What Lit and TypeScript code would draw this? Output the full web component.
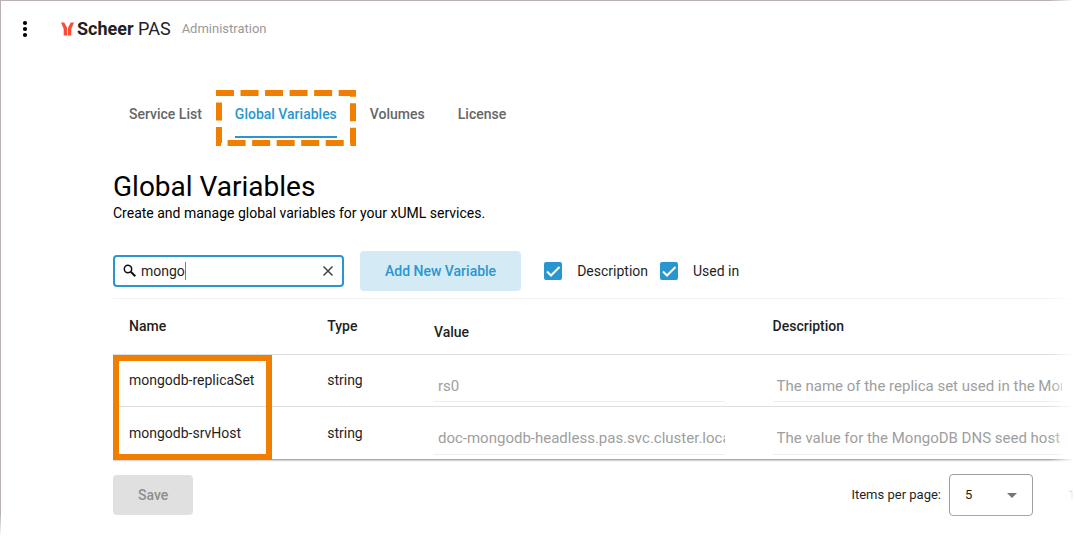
import { LitElement, html, css } from "lit";
import { customElement, state } from "lit/decorators.js";

interface Variable {
  name: string;
  type: string;
  value: string;
  description: string;
}

@customElement("app-root")
export class AppRoot extends LitElement {
  static styles = css`
    :host {
      display: block;
      position: relative;
      font-family: Roboto, "Liberation Sans", sans-serif;
      font-size: 14px;
      line-height: 20px;
      color: #1f1f1f;
    }
    * {
      box-sizing: border-box;
    }
    button, input, select {
      font: inherit;
      color: inherit;
      margin: 0;
    }
    .page {
      min-height: 100vh;
      overflow: hidden;
      background: #fff;
      border-top: 1px solid #b8b0b3;
      border-left: 1px solid #b8b0b3;
    }
    .fade {
      position: absolute;
      inset: 0;
      background:
        linear-gradient(to left, #fff 1px, rgba(255, 255, 255, 0) 26px),
        linear-gradient(to top, #fff 2px, rgba(255, 255, 255, 0) 26px);
      pointer-events: none;
    }
    .header {
      display: flex;
      align-items: center;
      height: 55px;
      padding-left: 16px;
    }
    .menu {
      display: flex;
      justify-content: center;
      width: 16px;
      padding: 0;
      border: 0;
      background: none;
    }
    .logo {
      display: flex;
      align-items: center;
      gap: 3px;
      margin-left: 28px;
      font-size: 18px;
      color: #222;
      text-decoration: none;
    }
    .logo b {
      font-weight: 700;
    }
    .area {
      margin-left: 11px;
      font-size: 13px;
      color: #999;
    }
    .main {
      padding-left: 112px;
    }
    .tabs {
      display: flex;
      gap: 33px;
      padding: 34px 16px 0;
    }
    .tab {
      position: relative;
      height: 48px;
      padding-top: 14px;
      font-weight: 500;
      color: #666;
      text-decoration: none;
    }
    .tab.active {
      color: #2a96cf;
      border-bottom: 2px solid #2a96cf;
    }
    .dashes {
      position: absolute;
      top: 0;
      left: -19px;
    }
    .title {
      margin: 33px 0 0;
      font-size: 28px;
      line-height: 32px;
      font-weight: 400;
      color: #000;
    }
    .lead {
      margin: 0;
      color: #000;
    }
    .toolbar {
      display: flex;
      align-items: center;
      margin-top: 28px;
    }
    .search {
      display: flex;
      align-items: center;
      width: 231px;
      height: 32px;
      padding: 0 8px;
      border: 2px solid #2a96cf;
      border-radius: 4px;
    }
    .search input {
      field-sizing: content;
      margin-left: 4px;
      padding: 0;
      border: 0;
      outline: 0;
      background: none;
    }
    .caret {
      flex: none;
      width: 1px;
      height: 18px;
      background: #2a96cf;
    }
    .clear {
      display: flex;
      margin-left: auto;
      padding: 0;
      border: 0;
      background: none;
    }
    .btn {
      height: 40px;
      padding: 0 25px;
      border: 0;
      border-radius: 4px;
      font-weight: 500;
    }
    .add {
      margin: 0 23px 0 16px;
      background: #d4eaf5;
      color: #2a96cf;
    }
    .check {
      display: grid;
      grid-template-columns: 18px auto;
      column-gap: 15px;
      align-items: center;
      margin-right: 12px;
    }
    .check input {
      grid-area: 1 / 1;
      appearance: none;
      width: 18px;
      height: 18px;
      border: 2px solid #2a96cf;
      border-radius: 2px;
    }
    .check input:checked {
      background: #2a96cf;
    }
    .check svg {
      grid-area: 1 / 1;
      pointer-events: none;
    }
    .panel {
      position: relative;
      margin-top: 7px;
      border-top: 1px solid #f2f2f2;
      box-shadow: 0 1px 2px rgba(0, 0, 0, 0.5);
      clip-path: inset(0 0 -6px 0);
    }
    .grid {
      width: 100%;
      table-layout: fixed;
      border-collapse: collapse;
    }
    .c-name { width: 20.6%; }
    .c-type { width: 11.1%; }
    .c-value { width: 35.2%; }
    th, td {
      padding: 0 0 0 16px;
      text-align: left;
      font-weight: 400;
    }
    th {
      height: 55px;
      font-weight: 500;
    }
    th.low {
      padding-top: 12px;
    }
    td {
      height: 52px;
      border-top: 1px solid #dedede;
    }
    tr:last-child td {
      height: 53px;
    }
    td.edit {
      padding-top: 8px;
      padding-right: 32px;
    }
    td.edit:last-child {
      padding-right: 13px;
    }
    .field {
      display: block;
      width: 100%;
      height: 36px;
      padding: 8px 0 4px 4px;
      border: 0;
      border-bottom: 1px solid #eee;
      background: none;
      color: #9e9e9e;
      font-size: 15px;
    }
    .frame {
      position: absolute;
      top: 56px;
      left: 0;
      width: 159px;
      height: 105px;
      border: 6px solid #f07f00;
      pointer-events: none;
    }
    .footer {
      display: flex;
      align-items: center;
      justify-content: space-between;
      margin-top: 15px;
    }
    .save {
      background: #e0e0e0;
      color: #8e8e8e;
    }
    .pager {
      display: flex;
      align-items: center;
      font-size: 13px;
    }
    .size {
      position: relative;
      display: flex;
      align-items: center;
      margin: 0 35px 0 8px;
    }
    .size select {
      appearance: none;
      width: 84px;
      height: 42px;
      padding: 0 15px;
      border: 1px solid #9e9e9e;
      border-radius: 4px;
      background: #fff;
    }
    .size svg {
      position: absolute;
      right: 16px;
      pointer-events: none;
    }
    .range {
      width: 7px;
      overflow: hidden;
      white-space: nowrap;
      color: #000;
    }
  `;

  @state() private variables: Variable[] = [
    {
      name: "mongodb-replicaSet",
      type: "string",
      value: "rs0",
      description: "The name of the replica set used in the MongoDB",
    },
    {
      name: "mongodb-srvHost",
      type: "string",
      value: "doc-mongodb-headless.pas.svc.cluster.local",
      description: "The value for the MongoDB DNS seed host list",
    },
  ];

  private checkbox(label: string) {
    return html`<label class="check">
      <input type="checkbox" checked />
      <svg width="18" height="18" viewBox="0 0 18 18">
        <path d="M3 9.5l4 4L15.500 5" fill="none" stroke="#fff" stroke-width="2" />
      </svg>
      <span>${label}</span>
    </label>`;
  }

  render() {
    return html`<div class="page">
        <header class="header">
          <button class="menu" aria-label="Menu">
            <svg width="6" height="18" viewBox="0 0 6 18">
              <circle cx="3" cy="3" r="2.1" />
              <circle cx="3" cy="9" r="2.1" />
              <circle cx="3" cy="15" r="2.1" />
            </svg>
          </button>
          <a class="logo" href="#">
            <svg width="13" height="14" viewBox="0 0 13 14" fill="#fb4a36">
              <path d="M0 .5h3.200L5.400 4.500c.5.9.7 1.800.7 2.800V13.500H2.700V8c0-1-.1-1.600-.6-2.600Z" />
              <path d="M13 .5H9.800L7.600 4.500C7.100 5.400 6.900 6.300 6.900 7.300V13.500h3.400V8c0-1 .1-1.600.6-2.600Z" />
            </svg>
            <span><b>Scheer</b> PAS</span>
          </a>
          <span class="area">Administration</span>
        </header>
        <main class="main">
          <nav class="tabs">
            <a class="tab" href="#">Service List</a>
            <a class="tab active" href="#">Global Variables
              <svg class="dashes" width="140" height="56" viewBox="0 0 140 56">
                <rect x="3" y="3" width="134" height="50" fill="none" stroke="#f07f00"
                  stroke-width="6" stroke-dasharray="18 6.533" stroke-dashoffset="3" />
              </svg>
            </a>
            <a class="tab" href="#">Volumes</a>
            <a class="tab" href="#">License</a>
          </nav>
          <h1 class="title">Global Variables</h1>
          <p class="lead">Create and manage global variables for your xUML services.</p>
          <div class="toolbar">
            <div class="search">
              <svg width="14" height="14" viewBox="0 0 14 14" fill="none" stroke="#111">
                <circle cx="5" cy="5" r="3.700" stroke-width="1.500" />
                <path d="M7.800 7.800L12.300 12.300" stroke-width="2" />
              </svg>
              <input type="text" aria-label="Search" value="mongo" />
              <span class="caret"></span>
              <button class="clear" aria-label="Clear">
                <svg width="12" height="12" viewBox="0 0 12 12" stroke="#444" stroke-width="1.500">
                  <path d="M1.500 1.500l9 9M10.500 1.500l-9 9" />
                </svg>
              </button>
            </div>
            <button class="btn add">Add New Variable</button>
            ${this.checkbox("Description")} ${this.checkbox("Used in")}
          </div>
          <div class="panel">
            <table class="grid">
              <colgroup>
                <col class="c-name" />
                <col class="c-type" />
                <col class="c-value" />
                <col />
              </colgroup>
              <thead>
                <tr>
                  <th>Name</th>
                  <th>Type</th>
                  <th class="low">Value</th>
                  <th>Description</th>
                </tr>
              </thead>
              <tbody>
                ${this.variables.map(
                  (v) => html`<tr>
                    <td>${v.name}</td>
                    <td>${v.type}</td>
                    <td class="edit">
                      <input class="field" aria-label="Value of ${v.name}" .value=${v.value} />
                    </td>
                    <td class="edit">
                      <input class="field" aria-label="Description of ${v.name}" .value=${v.description} />
                    </td>
                  </tr>`
                )}
              </tbody>
            </table>
            <div class="frame"></div>
          </div>
          <div class="footer">
            <button class="btn save" disabled>Save</button>
            <div class="pager">
              <label for="size">Items per page:</label>
              <span class="size">
                <select id="size"><option>5</option></select>
                <svg width="10" height="5" viewBox="0 0 10 5"><path d="M0 0h10L5 5Z" fill="#757575" /></svg>
              </span>
              <span class="range">1</span>
            </div>
          </div>
        </main>
      </div>
      <div class="fade"></div>`;
  }
}
